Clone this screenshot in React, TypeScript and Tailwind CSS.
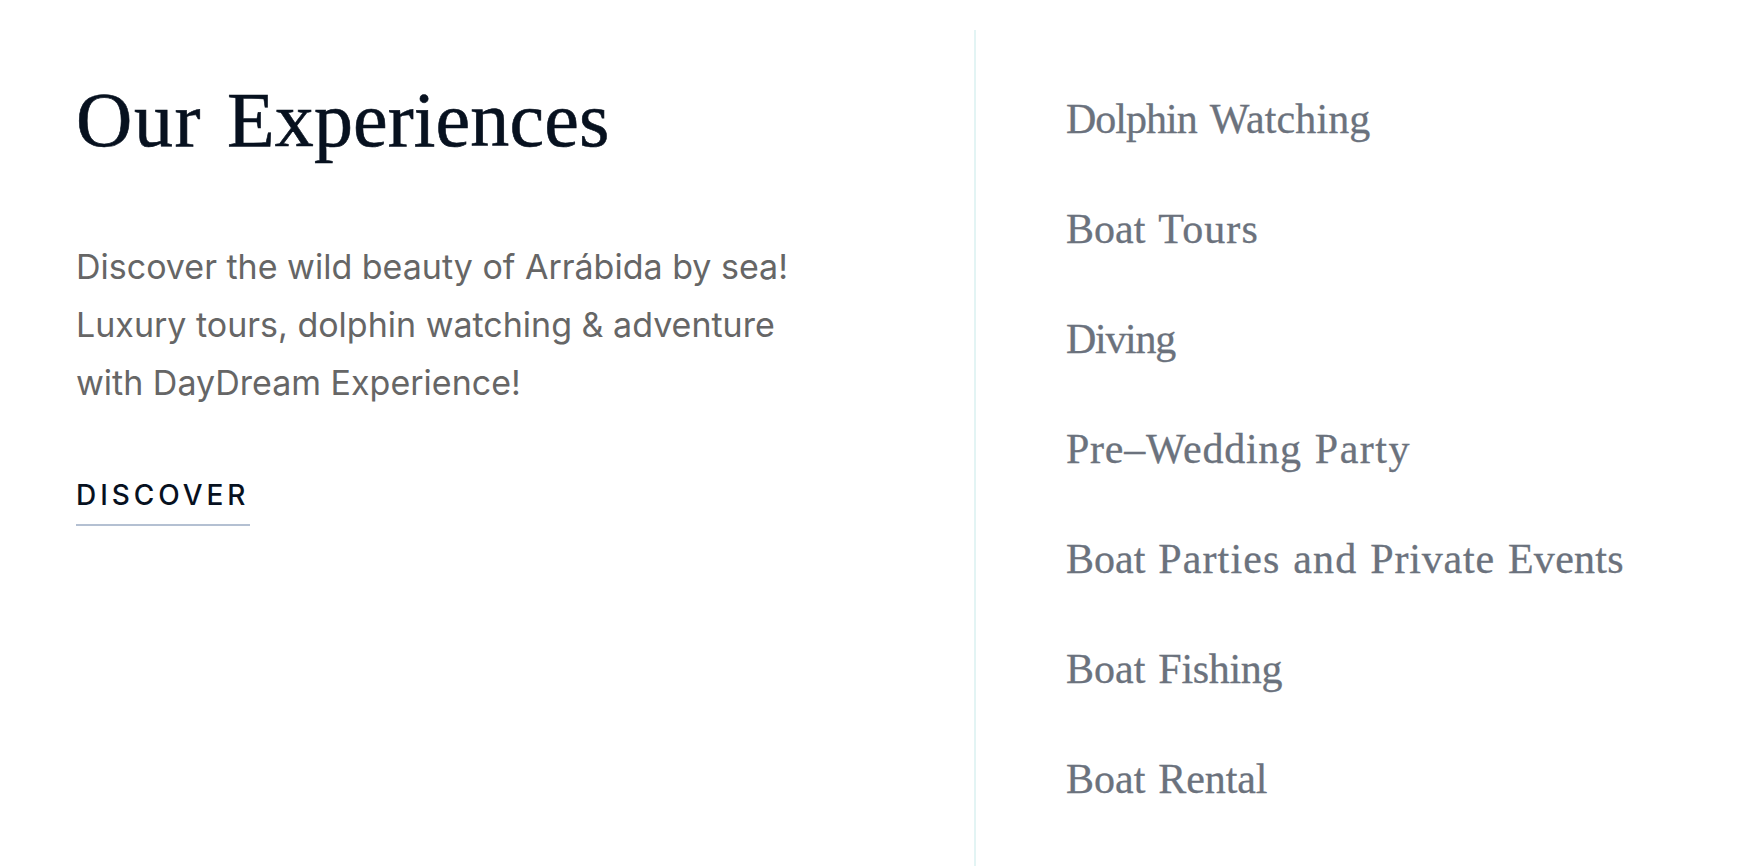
type Word = { text: string; tracking: string };

const experiences: Word[][] = [
  [
    { text: "Dolphin", tracking: "tracking-[-1px]" },
    { text: "Watching", tracking: "tracking-[0.1px]" },
  ],
  [
    { text: "Boat", tracking: "tracking-[0px]" },
    { text: "Tours", tracking: "tracking-[1.1px]" },
  ],
  [{ text: "Diving", tracking: "tracking-[-1.3px]" }],
  [
    { text: "Pre–Wedding", tracking: "tracking-[0.75px]" },
    { text: "Party", tracking: "tracking-[1.5px]" },
  ],
  [
    { text: "Boat", tracking: "tracking-[0px]" },
    { text: "Parties", tracking: "tracking-[1.1px]" },
    { text: "and", tracking: "tracking-[1.1px]" },
    { text: "Private", tracking: "tracking-[0.8px]" },
    { text: "Events", tracking: "tracking-[0.3px]" },
  ],
  [
    { text: "Boat", tracking: "tracking-[0px]" },
    { text: "Fishing", tracking: "tracking-[-0.3px]" },
  ],
  [
    { text: "Boat", tracking: "tracking-[0px]" },
    { text: "Rental", tracking: "tracking-[-0.1px]" },
  ],
];

function ExperienceLink({ words }: { words: Word[] }) {
  return (
    <li>
      <a href="#" className="flex gap-[13px] whitespace-nowrap">
        {words.map((word) => (
          <span key={word.text} className={word.tracking}>
            {word.text}
          </span>
        ))}
      </a>
    </li>
  );
}

export default function App() {
  return (
    <main className="flex h-[866px] w-full overflow-hidden bg-white pt-[30px] pl-[76px]">
      <section className="flex w-[898px] shrink-0 flex-col items-start">
        <h2 className="mt-[51px] flex gap-[25px] font-['Liberation_Serif',serif] text-[78px] leading-none whitespace-nowrap text-[#07111f] [-webkit-text-stroke:0.6px_#07111f]">
          <span className="tracking-[1.6px]">Our</span>
          <span className="tracking-[0.1px]">Experiences</span>
        </h2>
        <p className="mt-[79px] font-[Inter,sans-serif] text-[34px] leading-[58px] whitespace-nowrap text-[#666666]">
          Discover the wild beauty of Arrábida by sea!
          <br />
          Luxury tours, dolphin watching &amp; adventure
          <br />
          with DayDream Experience!
        </p>
        <a
          href="#"
          className="mt-[62px] flex h-[52px] w-[174px] border-b-2 border-[#b4c0d2] font-[Inter,sans-serif] text-[28px] leading-[42px] font-medium tracking-[3.95px] text-[#07111f]"
        >
          DISCOVER
        </a>
      </section>
      <nav className="flex-1 border-l-2 border-[#e3f4f4] pt-[34px] pl-[90px]">
        <ul className="font-['Liberation_Serif',serif] text-[42px] leading-[110px] text-[#6b727d] [-webkit-text-stroke:0.3px_#6b727d]">
          {experiences.map((words, index) => (
            <ExperienceLink key={index} words={words} />
          ))}
        </ul>
      </nav>
    </main>
  );
}
